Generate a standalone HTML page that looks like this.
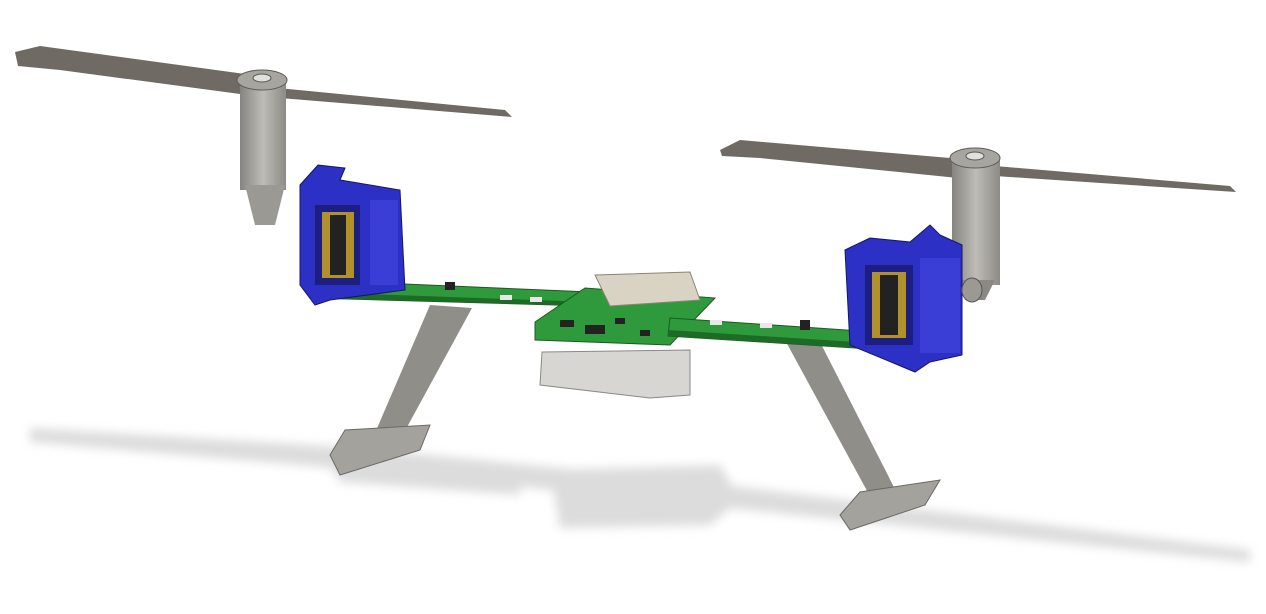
<!DOCTYPE html>
<html><head><meta charset="utf-8"><style>html,body{margin:0;padding:0;background:#fff;width:1266px;height:614px;overflow:hidden}</style></head>
<body>
<svg width="1266" height="614" viewBox="0 0 1266 614" xmlns="http://www.w3.org/2000/svg">
<defs>
<filter id="b" x="-10%" y="-50%" width="120%" height="200%"><feGaussianBlur stdDeviation="5"/></filter>
<linearGradient id="tube" x1="0" x2="1"><stop offset="0" stop-color="#858480"/><stop offset="0.5" stop-color="#bdbcb6"/><stop offset="1" stop-color="#8c8b86"/></linearGradient>
</defs>
<g filter="url(#b)" fill="#dcdcdc">
<polygon points="30,428 360,448 700,482 1250,550 1250,562 700,505 360,470 30,442"/>
<polygon points="550,470 720,465 740,500 710,525 560,528"/>
<polygon points="330,465 520,480 520,495 340,482"/>
</g>
<polygon points="15,52 40,46 245,74 255,96 60,70 18,66" fill="#6f6b64"/>
<polygon points="278,88 505,110 512,117 280,98" fill="#6f6b64"/>
<rect x="240" y="82" width="46" height="108" fill="url(#tube)"/>
<polygon points="245,185 285,185 275,225 255,225" fill="#9a9994"/>
<ellipse cx="262" cy="80" rx="25" ry="10" fill="#a6a59f" stroke="#5e5d58"/>
<ellipse cx="262" cy="78" rx="9" ry="4" fill="#e0e0dc" stroke="#555"/>
<polygon points="720,150 740,140 950,158 958,178 760,158 722,156" fill="#6f6b64"/>
<polygon points="995,166 1230,186 1236,192 995,176" fill="#6f6b64"/>
<rect x="952" y="160" width="48" height="125" fill="url(#tube)"/>
<polygon points="958,280 995,280 985,300 965,300" fill="#8a8984"/>
<ellipse cx="975" cy="158" rx="25" ry="10" fill="#a6a59f" stroke="#5e5d58"/>
<ellipse cx="975" cy="156" rx="9" ry="4" fill="#e0e0dc" stroke="#555"/>
<polygon points="430,305 472,308 400,440 372,440" fill="#8f8e89"/>
<polygon points="330,455 345,430 430,425 420,450 340,475" fill="#a3a29d" stroke="#6a6965"/>
<polygon points="785,340 820,342 898,495 872,500" fill="#8f8e89"/>
<polygon points="840,515 860,492 940,480 925,505 850,530" fill="#a3a29d" stroke="#6a6965"/>
<polygon points="542,352 690,350 690,395 650,398 540,385" fill="#d8d6d2" stroke="#8a8985"/>
<polygon points="312,280 590,292 590,306 312,298" fill="#2f9a3c" stroke="#1d5a22"/>
<polygon points="312,292 590,302 590,306 312,298" fill="#1e6a27"/>
<polygon points="535,322 585,288 715,298 670,345 535,340" fill="#2f9a3c" stroke="#1d5a22"/>
<polygon points="670,318 920,335 918,352 668,336" fill="#2f9a3c" stroke="#1d5a22"/>
<polygon points="668,330 918,346 918,352 668,336" fill="#1e6a27"/>
<polygon points="595,275 690,272 700,300 610,306" fill="#d9d3c3" stroke="#8a8578"/>
<g fill="#222"><rect x="560" y="320" width="14" height="7"/><rect x="585" y="325" width="20" height="9"/><rect x="615" y="318" width="10" height="6"/><rect x="445" y="282" width="10" height="8"/><rect x="800" y="320" width="10" height="10"/><rect x="640" y="330" width="10" height="6"/></g>
<g fill="#e8e8e8"><rect x="500" y="295" width="12" height="5"/><rect x="530" y="297" width="12" height="5"/><rect x="710" y="320" width="12" height="5"/><rect x="760" y="323" width="12" height="5"/></g>
<polygon points="300,185 318,165 345,168 340,180 400,190 405,290 330,300 315,305 300,285" fill="#2d30c4" stroke="#14166a"/>
<rect x="315" y="205" width="45" height="80" fill="#1c1e80"/>
<rect x="322" y="212" width="32" height="66" fill="#b0912c"/>
<rect x="330" y="215" width="16" height="60" fill="#222"/>
<rect x="370" y="200" width="28" height="85" fill="#3a3ed6"/>
<polygon points="845,250 870,238 910,242 930,225 940,235 962,245 962,355 930,362 915,372 850,345" fill="#2d30c4" stroke="#14166a"/>
<rect x="865" y="265" width="48" height="80" fill="#1c1e80"/>
<rect x="872" y="272" width="34" height="66" fill="#b0912c"/>
<rect x="880" y="275" width="18" height="60" fill="#222"/>
<rect x="920" y="258" width="40" height="95" fill="#3a3ed6"/>
<ellipse cx="972" cy="290" rx="10" ry="12" fill="#9a9994" stroke="#555"/>
</svg>
</body></html>
